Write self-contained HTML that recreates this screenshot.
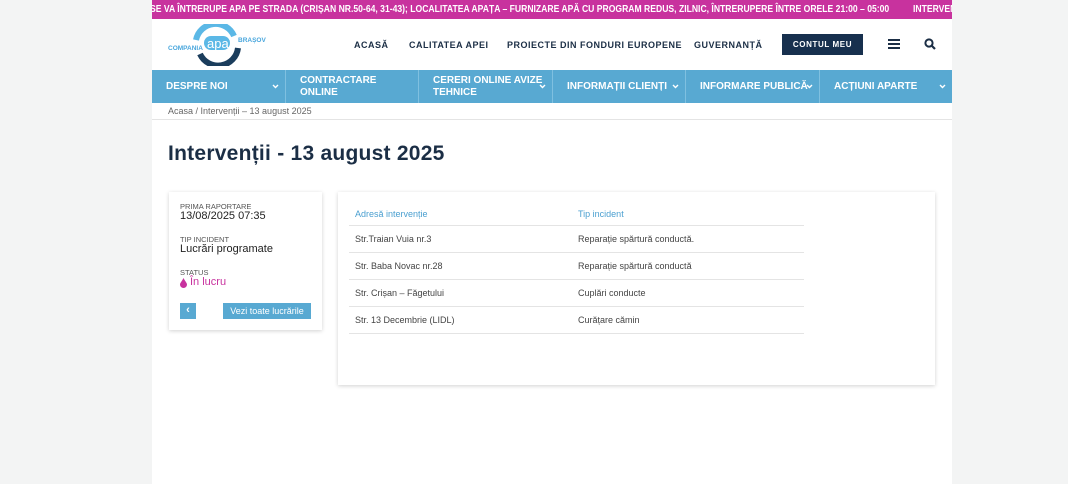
<!DOCTYPE html>
<html><head><meta charset="utf-8"><style>
*{margin:0;padding:0;box-sizing:border-box}
body{width:1068px;height:484px;overflow:hidden;background:#f3f4f4;font-family:"Liberation Sans",sans-serif;position:relative}
.top{position:absolute;left:152px;top:0;width:800px;height:19px;background:#c8329e;color:#fff;font-size:10px;line-height:19px;white-space:nowrap;overflow:hidden;font-weight:bold}
.top span{position:absolute;top:0;transform:scaleX(.86);transform-origin:left}
.page{position:absolute;left:152px;top:19px;width:800px;height:465px;background:#fff}
.ab{position:absolute}
.menu{font-size:9px;font-weight:bold;color:#1b2e45;letter-spacing:.5px;top:21px}
.nav{position:absolute;left:0;top:51px;width:800px;height:33px;background:#58a9d2;display:flex}
.nav div{position:relative;height:33px;border-right:1px solid #7fc0e0;color:#fff;font-size:10px;font-weight:bold;padding-left:14px;display:flex;align-items:center;line-height:12px}
.nav svg{position:absolute;right:6px;top:14px}
.crumb{position:absolute;left:0;top:84px;width:800px;height:17px;border-bottom:1px solid #e4e4e4;font-size:9px;color:#666;padding-left:16px;line-height:17px}
h1{position:absolute;left:16px;top:123px;font-size:21px;color:#1b2e45;font-weight:bold;letter-spacing:.25px}
.card{position:absolute;background:#fff;box-shadow:0 1px 4px rgba(0,0,0,.18)}
.lbl{font-size:7.5px;color:#555;text-transform:uppercase}
.val{font-size:11px;color:#222}
table{border-collapse:collapse;position:absolute;left:11px;top:11px;width:455px;font-size:9px;color:#444}
td,th{height:27px;border-bottom:1px solid #e4e4e4;text-align:left;font-weight:normal;padding-left:6px}
th{color:#4a9fd0;height:22px}
</style></head><body>
<div class="top"><span style="left:-2px">SE VA ÎNTRERUPE APA PE STRADA (CRIȘAN NR.50-64, 31-43); LOCALITATEA APAȚA – FURNIZARE APĂ CU PROGRAM REDUS, ZILNIC, ÎNTRERUPERE ÎNTRE ORELE 21:00 – 05:00</span><span style="left:761px">INTERVENȚII</span></div>
<div class="page">
<svg class="ab" style="left:14px;top:5px" width="105" height="42" viewBox="0 0 105 42">
<path d="M30 16 A20 20 0 0 1 68 12" stroke="#5bb8e6" stroke-width="6" fill="none"/>
<path d="M34 30 A20 20 0 0 0 72 24" stroke="#1b3d5c" stroke-width="6" fill="none"/>
<rect x="38" y="12" width="26" height="14" rx="7" fill="#5bb8e6"/>
<text x="41" y="24" font-size="13" fill="#fff" font-family="Liberation Sans">apa</text>
<text x="2" y="26" font-size="6.5" fill="#4aa7dd" font-weight="bold">COMPANIA</text>
<text x="72" y="18" font-size="6.5" fill="#4aa7dd" font-weight="bold">BRAȘOV</text>
</svg>
<div class="ab menu" style="left:202px">ACASĂ</div>
<div class="ab menu" style="left:257px">CALITATEA APEI</div>
<div class="ab menu" style="left:355px">PROIECTE DIN FONDURI EUROPENE</div>
<div class="ab menu" style="left:542px">GUVERNANȚĂ</div>
<div class="ab" style="left:630px;top:15px;width:81px;height:21px;background:#17304e;color:#fff;font-size:8px;font-weight:bold;letter-spacing:.6px;text-align:center;line-height:21px">CONTUL MEU</div>
<div class="ab" style="left:736px;top:20px;width:12px;height:2px;background:#1b2e45;box-shadow:0 4px 0 #1b2e45,0 8px 0 #1b2e45"></div>
<svg class="ab" style="left:772px;top:19px" width="12" height="12" viewBox="0 0 12 12"><circle cx="5" cy="5" r="3.6" stroke="#1b2e45" stroke-width="2" fill="none"/><path d="M7.5 7.5L11 11" stroke="#1b2e45" stroke-width="2.2"/></svg>
<div class="nav">
<div style="width:134px">DESPRE NOI<svg width="7" height="5" viewBox="0 0 7 5"><path d="M1 1l2.5 2.5L6 1" stroke="#fff" stroke-width="1.4" fill="none"/></svg></div>
<div style="width:133px">CONTRACTARE<br>ONLINE</div>
<div style="width:134px">CERERI ONLINE AVIZE<br>TEHNICE<svg width="7" height="5" viewBox="0 0 7 5"><path d="M1 1l2.5 2.5L6 1" stroke="#fff" stroke-width="1.4" fill="none"/></svg></div>
<div style="width:133px">INFORMAȚII CLIENȚI<svg width="7" height="5" viewBox="0 0 7 5"><path d="M1 1l2.5 2.5L6 1" stroke="#fff" stroke-width="1.4" fill="none"/></svg></div>
<div style="width:134px">INFORMARE PUBLICĂ<svg width="7" height="5" viewBox="0 0 7 5"><path d="M1 1l2.5 2.5L6 1" stroke="#fff" stroke-width="1.4" fill="none"/></svg></div>
<div style="width:132px;border:none">ACȚIUNI APARTE<svg width="7" height="5" viewBox="0 0 7 5"><path d="M1 1l2.5 2.5L6 1" stroke="#fff" stroke-width="1.4" fill="none"/></svg></div>
</div>
<div class="crumb">Acasa / Intervenții – 13 august 2025</div>
<h1>Intervenții - 13 august 2025</h1>
<div class="card" style="left:17px;top:173px;width:153px;height:138px">
<div class="ab lbl" style="left:11px;top:10px">Prima raportare</div>
<div class="ab val" style="left:11px;top:18px">13/08/2025 07:35</div>
<div class="ab lbl" style="left:11px;top:43px">Tip incident</div>
<div class="ab val" style="left:11px;top:51px">Lucrări programate</div>
<div class="ab lbl" style="left:11px;top:76px">Status</div>
<svg class="ab" style="left:11px;top:86px" width="7" height="10" viewBox="0 0 7 10"><path d="M3.5 0C2 3 0 5 0 6.5A3.5 3.5 0 0 0 7 6.5C7 5 5 3 3.5 0z" fill="#c8329e"/></svg>
<div class="ab" style="left:21px;top:84px;font-size:11px;color:#c8329e">În lucru</div>
<div class="ab" style="left:11px;top:111px;width:16px;height:16px;background:#58a9d2;color:#fff;font-size:11px;font-weight:bold;text-align:center;line-height:15px">‹</div>
<div class="ab" style="left:54px;top:111px;width:88px;height:16px;background:#58a9d2;color:#fff;font-size:9px;text-align:center;line-height:16px">Vezi toate lucrările</div>
</div>
<div class="card" style="left:186px;top:173px;width:597px;height:193px">
<table>
<tr><th style="width:223px">Adresă intervenție</th><th>Tip incident</th></tr>
<tr><td>Str.Traian Vuia nr.3</td><td>Reparație spărtură conductă.</td></tr>
<tr><td>Str. Baba Novac nr.28</td><td>Reparație spărtură conductă</td></tr>
<tr><td>Str. Crișan – Făgetului</td><td>Cuplări conducte</td></tr>
<tr><td>Str. 13 Decembrie (LIDL)</td><td>Curățare cămin</td></tr>
</table>
</div>
</div>
</body></html>
